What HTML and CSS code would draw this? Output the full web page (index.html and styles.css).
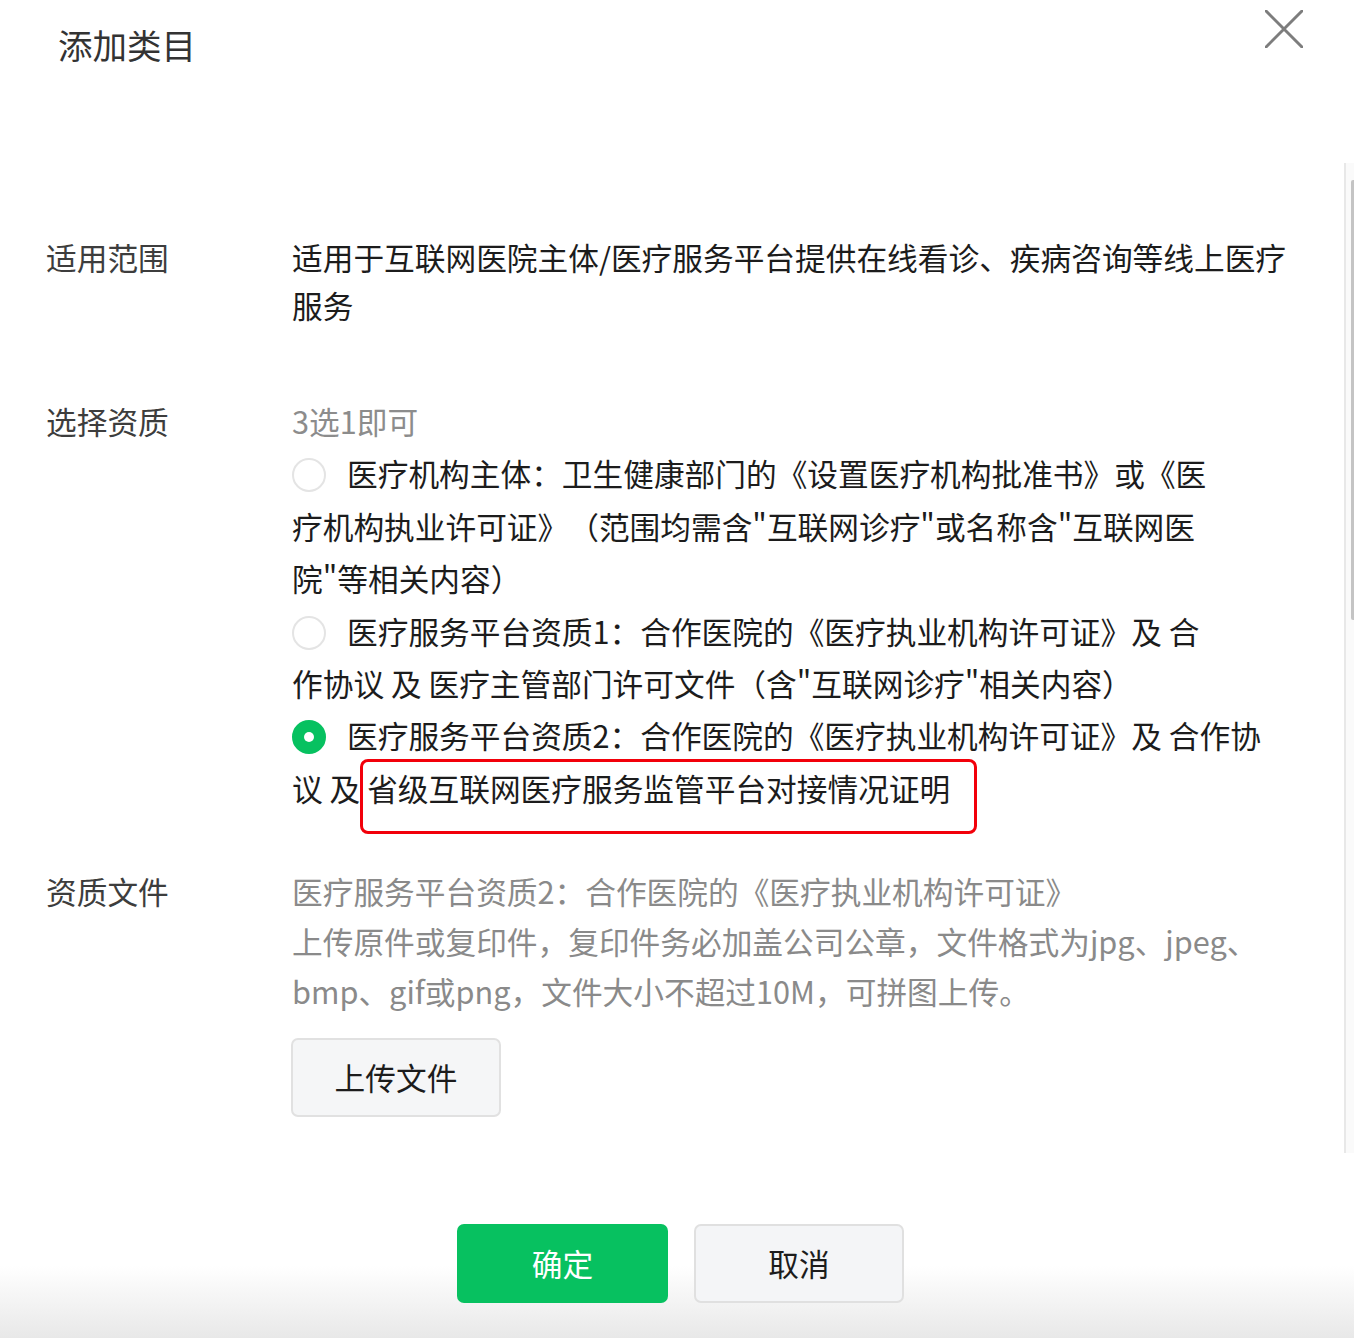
FILE: index.html
```html
<!DOCTYPE html>
<html lang="zh-CN">
<head>
<meta charset="utf-8">
<title>添加类目</title>
<link rel="stylesheet" href="styles.css">
</head>
<body>
<div class="dialog">
  <header class="dlg-head">
    <h1 class="dlg-title">添加类目</h1>
    <button class="dlg-close" aria-label="关闭">
      <svg width="38" height="38" viewBox="0 0 38 38"><path d="M1 1 L37 37 M37 1 L1 37" stroke="#7d7d7d" stroke-width="3" stroke-linecap="round" fill="none"/></svg>
    </button>
  </header>

  <main class="dlg-body">
    <section class="row row-scope">
      <div class="label">适用范围</div>
      <div class="content">适用于互联网医院主体/医疗服务平台提供在线看诊、疾病咨询等线上医疗<br>服务</div>
    </section>

    <section class="row row-qual">
      <div class="label">选择资质</div>
      <div class="content">
        <p class="hint">3选1即可</p>
        <p class="option"><span class="radio"></span>医疗机构主体：卫生健康部门的《设置医疗机构批准书》或《医<br>疗机构执业许可证》（范围均需含"互联网诊疗"或名称含"互联网医<br>院"等相关内容）</p>
        <p class="option"><span class="radio"></span>医疗服务平台资质1：合作医院的《医疗执业机构许可证》及 合<br>作协议 及 医疗主管部门许可文件（含"互联网诊疗"相关内容）</p>
        <p class="option"><span class="radio checked"></span>医疗服务平台资质2：合作医院的《医疗执业机构许可证》及 合作协<br>议 及 <span class="mark">省级互联网医疗服务监管平台对接情况证明</span></p>
      </div>
    </section>

    <section class="row row-file">
      <div class="label">资质文件</div>
      <div class="content">
        <p class="desc">医疗服务平台资质2：合作医院的《医疗执业机构许可证》<br>上传原件或复印件，复印件务必加盖公司公章，文件格式为jpg、jpeg、<br>bmp、gif或png，文件大小不超过10M，可拼图上传。</p>
        <button class="btn btn-upload">上传文件</button>
      </div>
    </section>
  </main>

  <footer class="dlg-foot">
    <button class="btn btn-primary">确定</button>
    <button class="btn btn-default">取消</button>
  </footer>

  <div class="scrollbar"><div class="thumb"></div></div>
</div>
</body>
</html>
```

FILE: styles.css
```css
* { box-sizing: border-box; }

html, body {
  margin: 0;
  padding: 0;
}

body {
  width: 1354px;
  height: 1338px;
  overflow: hidden;
  font-family: "Noto Sans CJK SC", "Noto Sans", sans-serif;
  color: #1c1c1c;
  background: linear-gradient(180deg, #ffffff 0, #ffffff 1266px, #e8e8e8 1338px);
  text-spacing-trim: space-all;
}

.dialog {
  position: relative;
  height: 1338px;
}

.dlg-head {
  display: flex;
  justify-content: space-between;
  align-items: flex-start;
  padding: 0 51px 0 58px;
}

.dlg-title {
  margin: 20px 0 0;
  font-size: 34.5px;
  line-height: 48px;
  font-weight: 400;
  color: #333;
}

.dlg-close {
  margin-top: 10px;
  padding: 0;
  border: 0;
  background: none;
  width: 38px;
  height: 38px;
  display: block;
}
.dlg-close svg { display: block; }

.dlg-body {
  padding: 165px 40px 0 46px;
  font-size: 30.7px;
}

.row {
  display: grid;
  grid-template-columns: 246px 1fr;
}

.label {
  color: #3d3d3d;
  white-space: nowrap;
}

.content p { margin: 0; }

.row-scope { line-height: 48px; }

.row-qual {
  margin-top: 66px;
  line-height: 52.4px;
}

.hint { color: #8c8c8c; }

.radio {
  display: inline-block;
  vertical-align: top;
  width: 34px;
  height: 34px;
  margin: 11px 21px 0 0;
  border: 2px solid #e4e4e4;
  border-radius: 50%;
  background: #fff;
  position: relative;
}

.radio.checked {
  border-color: #07c160;
  background: #07c160;
}
.radio.checked::after {
  content: "";
  position: absolute;
  left: 50%;
  top: 50%;
  width: 10px;
  height: 10px;
  margin: -5px 0 0 -5px;
  border-radius: 50%;
  background: #fff;
}

.mark {
  position: relative;
}
.mark::after {
  content: "";
  position: absolute;
  left: -7px;
  right: -27px;
  top: -6px;
  bottom: -24px;
  border: 3px solid #f2000a;
  border-radius: 8px;
}

.row-file {
  margin-top: 52px;
  line-height: 50px;
}

.desc { color: #8a8a8a; }

.btn {
  font-family: inherit;
  font-size: 30.7px;
  border-radius: 7px;
  height: 79px;
  padding: 0;
  display: flex;
  align-items: center;
  justify-content: center;
  cursor: pointer;
}

.btn-upload {
  margin-top: 22px;
  width: 210px;
  margin-left: -1px;
  background: #f5f6f7;
  border: 2px solid #e1e1e1;
  color: #1c1c1c;
  padding-bottom: 2px;
}

.dlg-foot {
  display: flex;
  justify-content: center;
  gap: 26px;
  margin-top: 107px;
  padding-left: 7px;
}

.btn-primary {
  width: 211px;
  background: #07c160;
  border: 0;
  color: #fff;
  padding-bottom: 3px;
}

.btn-default {
  width: 210px;
  background: #f4f5f7;
  border: 2px solid #e0e0e0;
  color: #1c1c1c;
  padding-bottom: 3px;
}

.scrollbar {
  position: absolute;
  right: 0;
  top: 163px;
  width: 10px;
  height: 990px;
  border-left: 2px solid #e8e8e8;
  background: #fafafa;
}
.scrollbar .thumb {
  position: absolute;
  right: 0;
  top: 17px;
  width: 3px;
  height: 440px;
  border-radius: 2px 0 0 2px;
  background: #c4c4c4;
}
```
